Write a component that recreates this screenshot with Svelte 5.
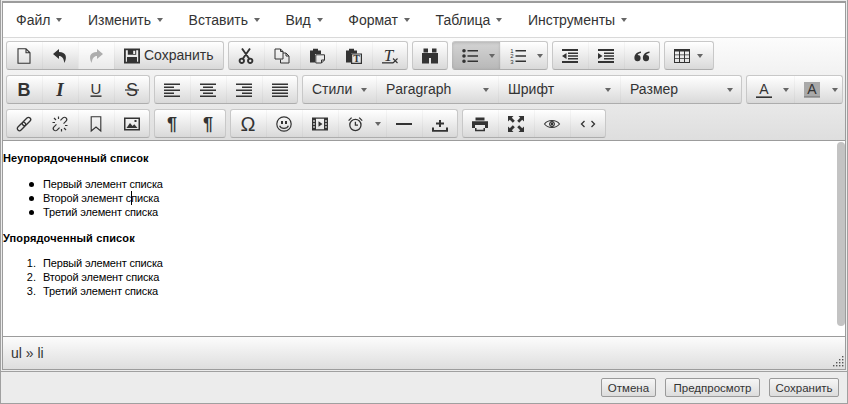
<script lang="ts">
  type Icon = { d?: string; s?: string; sw?: number; nz?: boolean; t?: { c: string; x: number; y: number; size: number; cls: string }[] };
  type Btn = { icon?: string; label?: string; caret?: boolean; w?: number; off?: boolean; active?: boolean; wide?: boolean };

  const r = (x: number, y: number, w: number, h: number) => `M${x} ${y}h${w}v${h}h${-w}z`;
  const dot = (x: number, y: number, q: number) => `M${x - q} ${y}a${q} ${q} 0 1 1 ${q * 2} 0a${q} ${q} 0 1 1 ${-q * 2} 0z`;
  const lines = (rows: [number, number][]) => rows.map(([x, w], i) => r(x, 1.5 + i * 3, w, 1.6)).join("");
  const numbers = (x: number) => [1, 2, 3].map((n, i) => ({ c: String(n), x, y: 5.2 + i * 5.2, size: 6, cls: "sans" }));
  const capsuleTop = "M10.06 9.06L14.06 5.06A2.2 2.2 0 0 0 10.94 1.94L6.94 5.94A2.2 2.2 0 0 0 10.06 9.06Z";
  const capsuleLow = "M1.94 10.94L5.94 6.94A2.2 2.2 0 0 1 9.06 10.06L5.06 14.06A2.2 2.2 0 0 1 1.94 10.94Z";

  const icons: Record<string, Icon> = {
    newdoc: { s: "M2 .8H10L14 4.8V15.2H2ZM10 .8V4.8H14", sw: 1.1 },
    undo: { d: "M7 1L1 6L7 11V8C10 8 11.6 10 12.4 15C15.4 9 14.2 4 7 4Z" },
    redo: { d: "M9 1L15 6L9 11V8C6 8 4.4 10 3.6 15C.6 9 1.8 4 9 4Z" },
    save: { d: r(0, 0.5, 16, 15) + r(1.8, 2.2, 12.4, 11.5) + r(3.8, 2.2, 8.4, 4.6) + r(9.2, 2.8, 2, 3.2) + r(3, 9, 10, 4.7) },
    cut: { s: "M4 .5L11 10.5M12 .5L5 10.5M6 12.8A2.2 2.2 0 1 1 1.6 12.8A2.2 2.2 0 1 1 6 12.8ZM14.4 12.8A2.2 2.2 0 1 1 10 12.8A2.2 2.2 0 1 1 14.4 12.8Z", sw: 1.9 },
    copy: { s: "M1 1H6.5L9 3.5V11H1ZM6.5 1V3.5H9M9 5H12L15 8V15H6.5V11.5M12 5V8H15", sw: 1 },
    paste: { d: "M0 2.5H3V.8H8V2.5H11V6H5V14.5H0Z", s: "M5.8 6.8H14.5V12L11.5 15H5.8ZM11.5 15V12H14.5", sw: 1 },
    pastetext: { d: "M0 2.5H3V.8H8V2.5H11V5.5H5V14.5H0Z", s: "M5.6 6H15.4V15.4H5.6Z", sw: 1.2, t: [{ c: "T", x: 10.5, y: 13.8, size: 10, cls: "serif bold" }] },
    removeformat: { d: r(0, 14.2, 11, 1.3), s: "M11 10.5L15.5 15M15.5 10.5L11 15", sw: 1.1, t: [{ c: "T", x: 6.5, y: 12.6, size: 17, cls: "serif ital" }] },
    search: { d: r(1.5, 0.5, 4.5, 4) + r(10, 0.5, 4.5, 4) + r(0, 5, 7, 10.5) + r(9, 5, 7, 10.5) + r(7, 5, 2, 5) },
    bullist: { d: r(5.5, 2, 10.5, 1.6) + r(5.5, 7.2, 10.5, 1.6) + r(5.5, 12.4, 10.5, 1.6) + dot(2, 2.8, 1.8) + dot(2, 8, 1.8) + dot(2, 13.2, 1.8) },
    numlist: { d: r(5.5, 2, 10.5, 1.6) + r(5.5, 7.2, 10.5, 1.6) + r(5.5, 12.4, 10.5, 1.6), t: numbers(2) },
    outdent: { d: r(0, 1, 16, 2) + r(6, 4.4, 10, 1.6) + r(6, 7.2, 10, 1.6) + r(6, 10, 10, 1.6) + r(0, 13, 16, 2) + "M4.5 5V11L0 8Z" },
    indent: { d: r(0, 1, 16, 2) + r(6, 4.4, 10, 1.6) + r(6, 7.2, 10, 1.6) + r(6, 10, 10, 1.6) + r(0, 13, 16, 2) + "M0 5V11L4.5 8Z" },
    quote: { nz: true, d: "M3.6 7A3.1 3.1 0 1 1 .4 10C.4 6.5 3 4.2 7 3.6V5C5.2 5.4 4 6 3.6 7ZM12.1 7A3.1 3.1 0 1 1 8.9 10C8.9 6.5 11.5 4.2 15.5 3.6V5C13.7 5.4 12.5 6 12.1 7Z" },
    table: { d: r(0, 1, 16, 14) + [1, 6, 11].flatMap((x) => [3.5, 7.3, 11.1].map((y) => r(x, y, 4, 2.9))).join("") },
    bold: { t: [{ c: "B", x: 8, y: 14.4, size: 18, cls: "sans bold" }] },
    italic: { t: [{ c: "I", x: 8, y: 14.4, size: 19, cls: "serif ital bold" }] },
    underline: { d: r(2.5, 13.4, 11, 1.5), t: [{ c: "U", x: 8, y: 11.8, size: 15, cls: "sans" }] },
    strike: { d: r(1, 7.4, 14, 1.2), t: [{ c: "S", x: 8, y: 14.4, size: 18, cls: "sans" }] },
    alignleft: { d: lines([[0, 16], [0, 10], [0, 16], [0, 10], [0, 16]]) },
    aligncenter: { d: lines([[0, 16], [3, 10], [0, 16], [3, 10], [0, 16]]) },
    alignright: { d: lines([[0, 16], [6, 10], [0, 16], [6, 10], [0, 16]]) },
    alignjustify: { d: lines([[0, 16], [0, 16], [0, 16], [0, 16], [0, 16]]) },
    forecolor: { d: r(0, 14.4, 16, 1.6), t: [{ c: "A", x: 8, y: 12, size: 14, cls: "sans" }] },
    backcolor: { t: [{ c: "A", x: 8, y: 12, size: 14, cls: "sans" }] },
    link: { s: capsuleTop + capsuleLow, sw: 1.3 },
    unlink: {
      s: "M11.56 7.56L14.06 5.06A2.2 2.2 0 0 0 10.94 1.94L8.44 4.44M4.44 8.44L1.94 10.94A2.2 2.2 0 0 0 5.06 14.06L7.56 11.56M6.5 .5V3M.5 6.5H3M2 2L4 4M15.5 9.5H13M9.5 15.5V13M14 14L12 12",
      sw: 1.2,
    },
    bookmark: { s: "M3.2 .8H12.8V15L8 11 3.2 15Z", sw: 1.1 },
    image: { d: r(0, 1.5, 16, 13) + r(1.5, 3, 13, 10) + "M2.5 12L6 7L8.5 10L10.3 8.2L13.5 12Z" + r(10.5, 4, 2, 2) },
    ltr: { t: [{ c: "¶", x: 8, y: 14.2, size: 18, cls: "sans bold" }] },
    rtl: { t: [{ c: "¶", x: 8, y: 14.2, size: 18, cls: "sans bold" }] },
    omega: { t: [{ c: "Ω", x: 8, y: 15.4, size: 20, cls: "sans" }] },
    smile: { d: r(5, 5, 2, 3) + r(9, 5, 2, 3), s: "M15.2 8A7.2 7.2 0 1 1 .8 8A7.2 7.2 0 1 1 15.2 8ZM3.6 9.8C5 13.2 11 13.2 12.4 9.8", sw: 1.2 },
    media: {
      d: r(0, 1.5, 16, 13) + r(4, 2.7, 8, 10.6) + r(1.2, 4.2, 1.6, 1.6) + r(1.2, 7.2, 1.6, 1.6) + r(1.2, 10.2, 1.6, 1.6) + r(13.2, 4.2, 1.6, 1.6) + r(13.2, 7.2, 1.6, 1.6) + r(13.2, 10.2, 1.6, 1.6) + "M6.5 5.3L10.5 8L6.5 10.7Z",
    },
    clock: { s: "M13 9A5.6 5.6 0 1 1 1.8 9A5.6 5.6 0 1 1 13 9ZM7.4 5.8V9.2H10M.6 4.6L3.6 1.6M14.2 4.6L11.2 1.6", sw: 1.3 },
    hr: { d: r(0, 7, 16, 2) },
    pagebreak: { d: r(7, 4, 2, 7) + r(4, 6.5, 3, 2) + r(9, 6.5, 3, 2) + "M0 11.5h2v2.5h12v-2.5h2v4.3h-16z" },
    print: { d: r(3.5, 1.5, 9, 3) + r(0, 5.2, 16, 6.8) + r(3, 9, 10, 3) + r(3, 12, 10, 3.2) + r(4.5, 12, 7, 1.7) },
    fullscreen: {
      d: "M0 0H5.5L3.8 1.8 6.8 4.8 4.8 6.8 1.8 3.8 0 5.5ZM16 0V5.5L14.2 3.8 11.2 6.8 9.2 4.8 12.2 1.8 10.5 0ZM0 16V10.5L1.8 12.2 4.8 9.2 6.8 11.2 3.8 14.2 5.5 16ZM16 16H10.5L12.2 14.2 9.2 11.2 11.2 9.2 14.2 12.2 16 10.5Z",
    },
    eye: { s: "M.5 8C4 3.4 12 3.4 15.5 8C12 12.6 4 12.6 .5 8ZM10.4 8A2.4 2.4 0 1 1 5.6 8A2.4 2.4 0 1 1 10.4 8Z", sw: 1.1, d: dot(8, 8, 1.4) },
    code: { s: "M4.5 5L1.5 8L4.5 11M11.5 5L14.5 8L11.5 11", sw: 1.3 },
  };

  const menus = ["Файл", "Изменить", "Вставить", "Вид", "Формат", "Таблица", "Инструменты"];
  const listboxes: Record<string, number> = { Стили: 74, Paragraph: 122, Шрифт: 122, Размер: 122 };

  const toolbar: Btn[][][] = [
    [
      [{ icon: "newdoc" }, { icon: "undo" }, { icon: "redo", off: true }, { icon: "save", label: "Сохранить", w: 110 }],
      [{ icon: "cut" }, { icon: "copy" }, { icon: "paste" }, { icon: "pastetext" }, { icon: "removeformat" }],
      [{ icon: "search" }],
      [{ icon: "bullist", caret: true, w: 48, active: true }, { icon: "numlist", caret: true, w: 48 }],
      [{ icon: "outdent" }, { icon: "indent" }, { icon: "quote" }],
      [{ icon: "table", caret: true, w: 50, wide: true }],
    ],
    [
      [{ icon: "bold" }, { icon: "italic" }, { icon: "underline" }, { icon: "strike" }],
      [{ icon: "alignleft" }, { icon: "aligncenter" }, { icon: "alignright" }, { icon: "alignjustify" }],
      Object.entries(listboxes).map(([label, w]) => ({ label, w, caret: true })),
      [{ icon: "forecolor", caret: true, w: 48 }, { icon: "backcolor", caret: true, w: 49 }],
    ],
    [
      [{ icon: "link" }, { icon: "unlink" }, { icon: "bookmark" }, { icon: "image" }],
      [{ icon: "ltr" }, { icon: "rtl" }],
      [{ icon: "omega" }, { icon: "smile" }, { icon: "media" }, { icon: "clock", caret: true, w: 48 }, { icon: "hr" }, { icon: "pagebreak" }],
      [{ icon: "print" }, { icon: "fullscreen" }, { icon: "eye" }, { icon: "code" }],
    ],
  ];

  const items = ["Первый элемент списка", "Второй элемент списка", "Третий элемент списка"];
  const grip = [
    [9, 0], [6, 3], [9, 3], [3, 6], [6, 6], [9, 6], [0, 9], [3, 9], [6, 9], [9, 9],
  ];
</script>

<div class="window">
  <div class="editor">
    <nav class="menubar">
      {#each menus as m}
        <span class="menu">{m}<i class="caret"></i></span>
      {/each}
    </nav>

    <div class="toolbar">
      {#each toolbar as row}
        <div class="row">
          {#each row as group}
            <div class="group">
              {#each group as b}
                <button
                  type="button"
                  class="btn"
                  class:off={b.off}
                  class:active={b.active}
                  class:wide={b.wide}
                  class:listbox={!b.icon}
                  style:width="{b.w ?? 36}px"
                >
                  {#if b.icon}
                    {@const ic = icons[b.icon]}
                    <svg viewBox="0 0 16 16" width="16" height="16" aria-hidden="true">
                      {#if b.icon === "backcolor"}
                        <rect class="swatch" x="0" y="0" width="16" height="13.5" />
                        <rect class="swatch-bar" x="0" y="13.5" width="16" height="2.2" />
                      {/if}
                      {#if ic.d}<path d={ic.d} fill-rule={ic.nz ? "nonzero" : "evenodd"} />{/if}
                      {#if ic.s}<path class="line" d={ic.s} stroke-width={ic.sw} />{/if}
                      {#each ic.t ?? [] as t}
                        <text class={t.cls} x={t.x} y={t.y} font-size={t.size} text-anchor="middle">{t.c}</text>
                      {/each}
                    </svg>
                  {/if}
                  {#if b.label}<span class="label">{b.label}</span>{/if}
                  {#if b.caret}<i class="caret end"></i>{/if}
                </button>
              {/each}
            </div>
          {/each}
        </div>
      {/each}
    </div>

    <div class="content">
      <p><strong>Неупорядоченный список</strong></p>
      <ul>
        <li>{items[0]}</li>
        <li>Второй элемент с<span class="cursor"></span>писка</li>
        <li>{items[2]}</li>
      </ul>
      <p class="second"><strong>Упорядоченный список</strong></p>
      <ol>
        {#each items as item}
          <li>{item}</li>
        {/each}
      </ol>
      <div class="scrollbar"></div>
    </div>

    <div class="statusbar">
      <span>ul » li</span>
      <svg class="grip" viewBox="0 0 11 11" width="11" height="11" aria-hidden="true">
        {#each grip as [x, y]}
          <rect {x} {y} width="1.4" height="1.4" />
        {/each}
      </svg>
    </div>
  </div>

  <div class="footer">
    <button type="button" class="action" style:width="55px">Отмена</button>
    <button type="button" class="action" style:width="95px">Предпросмотр</button>
    <button type="button" class="action" style:width="70px">Сохранить</button>
  </div>
</div>

<style>
  :global(body) {
    margin: 0;
    background: #fff;
  }

  .window {
    width: 848px;
    height: 404px;
    box-sizing: border-box;
    display: flex;
    flex-direction: column;
    background: #ececec;
    border: 1px solid #a0a0a0;
    border-top: 0;
    font-family: "Liberation Sans", Arial, sans-serif;
  }

  .editor {
    height: 369px;
    flex: none;
    box-sizing: border-box;
    margin: 1px 1px 1px;
    border: 1px solid #9c9c9c;
    border-top-width: 2px;
    display: flex;
    flex-direction: column;
    background: #fff;
  }

  .menubar {
    height: 35px;
    flex: none;
    box-sizing: border-box;
    border-bottom: 1px solid #d9d9d9;
    display: flex;
    align-items: center;
    padding: 0 0 1px 13px;
    gap: 25.5px;
    font-size: 14px;
    color: #333;
  }

  .menu {
    display: inline-flex;
    align-items: center;
    gap: 6px;
  }

  .caret {
    display: inline-block;
    width: 0;
    height: 0;
    border-top: 4px solid #666;
    border-left: 3.5px solid transparent;
    border-right: 3.5px solid transparent;
  }

  .toolbar {
    height: 103px;
    flex: none;
    box-sizing: border-box;
    padding: 3px 0 0 3px;
    display: flex;
    flex-direction: column;
    gap: 5px;
    background: linear-gradient(#fcfcfc, #dedede);
    border-bottom: 1px solid #9c9c9c;
  }

  .row {
    display: flex;
    gap: 4px;
  }

  .group {
    display: flex;
    height: 29px;
    box-sizing: border-box;
    border: 1px solid #c8c8c8;
    border-bottom-color: #adadad;
    border-radius: 3px;
    background: linear-gradient(#fff, #d9d9d9);
  }

  .btn {
    height: 27px;
    flex: none;
    box-sizing: border-box;
    padding: 0 0 0 9px;
    display: flex;
    align-items: center;
    border: 0;
    border-left: 1px solid rgba(0, 0, 0, 0.03);
    background: none;
    color: #333;
    font: 14px "Liberation Sans", Arial, sans-serif;
  }

  .btn:first-child {
    margin-left: -1px;
    padding-left: 10px;
    border-left: 0;
  }

  .btn:last-child {
    margin-right: -1px;
  }

  .btn.active {
    background: linear-gradient(#d4d4d4, #b8b8b8);
    box-shadow: inset 0 1px 3px rgba(0, 0, 0, 0.15);
    border-radius: 3px 0 0 3px;
  }

  .btn.off {
    background: rgba(255, 255, 255, 0.45);
  }

  .btn.off svg {
    fill: #adadad;
  }

  .end {
    margin-left: auto;
    margin-right: 5px;
  }

  .wide .end {
    margin-right: 11px;
  }

  .listbox .end {
    margin-right: 9px;
  }

  .label {
    margin: 0 0 2px 4px;
  }

  .listbox .label {
    margin-left: 0;
  }

  svg {
    flex: none;
    fill: #333;
    overflow: visible;
  }

  .line {
    fill: none;
    stroke: #333;
  }

  .swatch {
    fill: #a9a9a9;
  }

  .swatch-bar {
    fill: #8a8a8a;
  }

  text {
    font-family: "Liberation Sans", Arial, sans-serif;
  }

  text.serif {
    font-family: "Liberation Serif", "Times New Roman", serif;
  }

  text.bold {
    font-weight: 700;
  }

  text.ital {
    font-style: italic;
  }

  .content {
    position: relative;
    flex: 1;
    min-height: 0;
    padding: 10px 0 0 0;
    font-size: 11px;
    line-height: 14px;
    letter-spacing: -0.16px;
    color: #000;
    background: #fff;
    border-bottom: 1px solid #9c9c9c;
  }

  .content p {
    margin: 0 0 12px;
  }

  .content p.second {
    margin-bottom: 11px;
  }

  .content strong {
    letter-spacing: 0.14px;
  }

  .content ul,
  .content ol {
    margin: 0 0 12px;
    padding-left: 40px;
    list-style: none;
    counter-reset: item;
  }

  .content li {
    position: relative;
    counter-increment: item;
  }

  .content ul li::before {
    content: "";
    position: absolute;
    left: -14.5px;
    top: 4.5px;
    width: 5.5px;
    height: 5.5px;
    border-radius: 50%;
    background: #000;
  }

  .content ol li::before {
    content: counter(item) ".";
    position: absolute;
    right: 100%;
    margin-right: 7px;
    letter-spacing: 0;
  }

  .cursor {
    display: inline-block;
    width: 1px;
    height: 14px;
    margin-right: -1px;
    vertical-align: top;
    background: #000;
  }

  .scrollbar {
    position: absolute;
    top: 1px;
    right: 0;
    width: 8px;
    height: 184px;
    border-radius: 4px;
    background: #c3c3c3;
  }

  .statusbar {
    position: relative;
    height: 32px;
    flex: none;
    box-sizing: border-box;
    padding-left: 8px;
    display: flex;
    align-items: center;
    font-size: 14px;
    color: #333;
    background: linear-gradient(#fcfcfc, #dedede);
  }

  .grip {
    position: absolute;
    right: 1px;
    bottom: 2px;
    fill: #555;
  }

  .footer {
    flex: 1;
    display: flex;
    align-items: center;
    justify-content: flex-end;
    gap: 9px;
    padding-right: 8px;
    border-top: 1px solid #a0a0a0;
  }

  .action {
    height: 19px;
    box-sizing: border-box;
    padding: 0;
    border: 1px solid #9a9a9a;
    border-radius: 2px;
    background: linear-gradient(#f6f6f6, #dcdcdc);
    color: #333;
    font: 11.5px "Liberation Sans", Arial, sans-serif;
  }
</style>
